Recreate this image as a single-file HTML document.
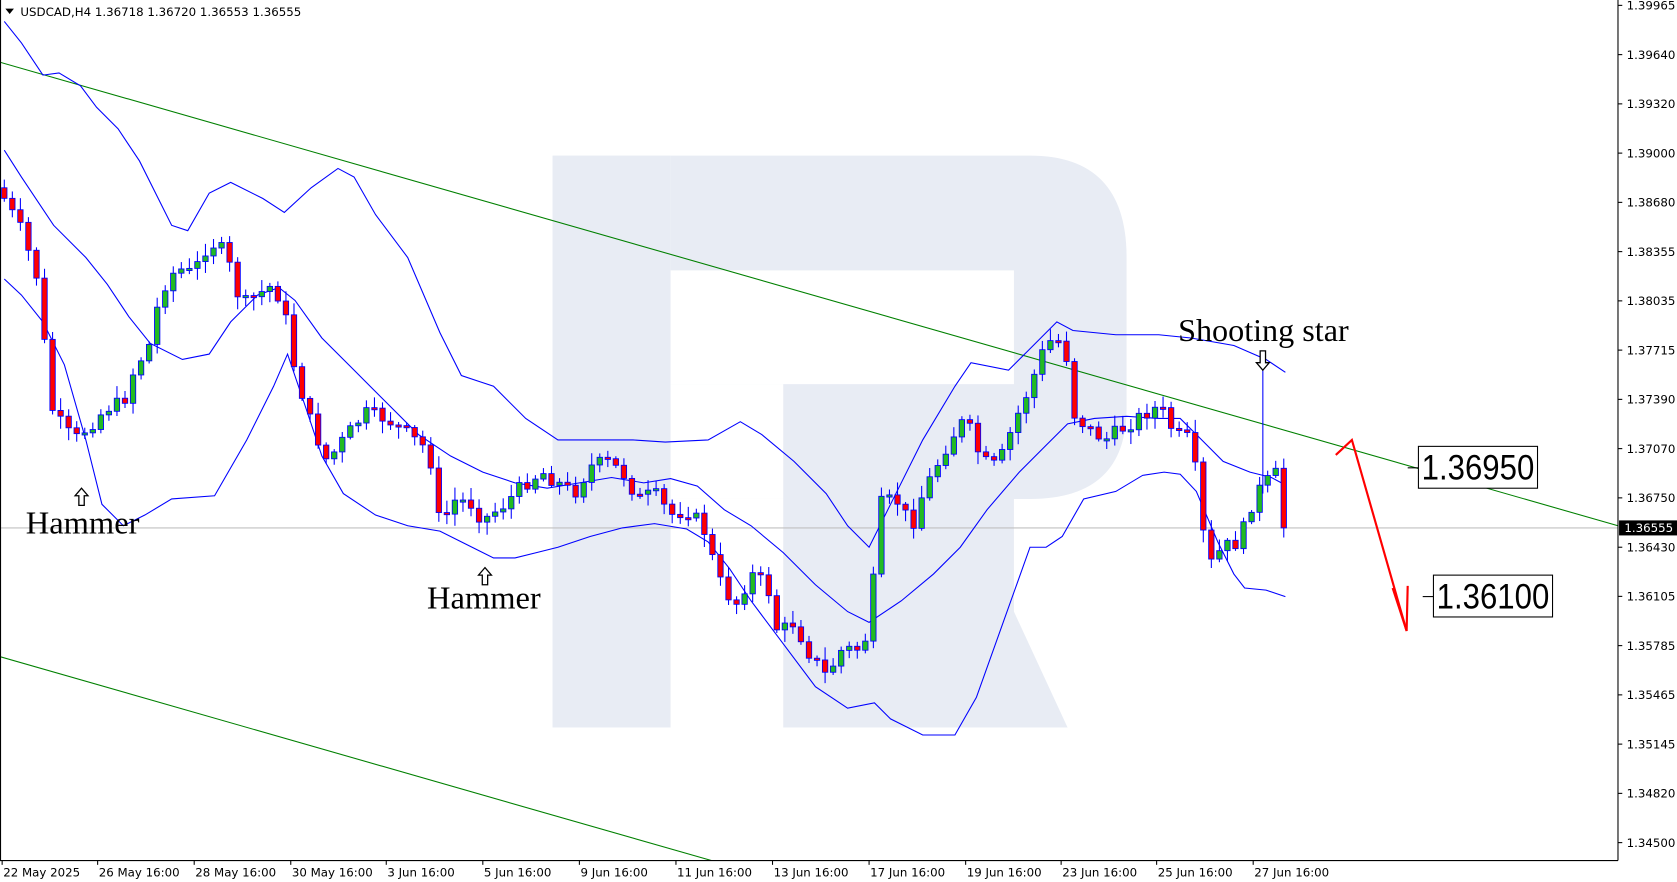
<!DOCTYPE html><html><head><meta charset="utf-8"><style>html,body{margin:0;padding:0;background:#fff;overflow:hidden}svg{display:block}text{font-family:"Liberation Sans",sans-serif}</style></head><body>
<svg id="s" width="1677" height="882" viewBox="0 0 1563 822" preserveAspectRatio="none" xmlns="http://www.w3.org/2000/svg">
<rect width="1563" height="822" fill="#fff"/>
<g fill="#e8ecf4">
<rect x="515" y="145" width="110" height="533"/>
<path d="M625 145 H960 Q1050 145 1050 240 V380 Q1050 465 960 465 H625 Z"/>
<path d="M730 358 H945 V570 L995 678 H730 Z"/>
</g>
<rect x="625" y="252" width="320" height="106" fill="#fff"/>
<rect x="625" y="358" width="105" height="107" fill="#fff"/>
<line x1="0" y1="492" x2="1508" y2="492" stroke="#c0c0c0" stroke-width="1"/>
<line x1="0" y1="58" x2="1508" y2="490" stroke="#008000" stroke-width="1"/>
<line x1="0" y1="612" x2="663" y2="802" stroke="#008000" stroke-width="1"/>
<g id="bands" fill="none" stroke="#0000ff" stroke-width="1"></g>
<g id="candles"></g>
<text x="24" y="497" font-size="30" textLength="106" lengthAdjust="spacingAndGlyphs" style="font-family:'Liberation Serif',serif">Hammer</text>
<text x="398" y="567" font-size="30" textLength="106" lengthAdjust="spacingAndGlyphs" style="font-family:'Liberation Serif',serif">Hammer</text>
<text x="1098" y="318" font-size="30" textLength="159" lengthAdjust="spacingAndGlyphs" style="font-family:'Liberation Serif',serif">Shooting star</text>
<g fill="#fff" stroke="#000" stroke-width="1.2">
<path d="M76 455 L70 462 H73.5 V471 H78.5 V462 H82 Z"/>
<path d="M452 529 L446 536 H449.5 V545 H454.5 V536 H458 Z"/>
<path d="M1177 345 L1171 338 H1174.5 V327 H1179.5 V338 H1183 Z"/>
</g>
<g stroke="#ff0000" stroke-width="2" fill="none">
<path d="M1245 424 L1260 410 L1311 588"/>
<path d="M1298 548 L1311 588 L1312 546"/>
</g>
<line x1="1312" y1="436" x2="1322" y2="436" stroke="#000"/>
<rect x="1322" y="416" width="111" height="39" fill="#fff" stroke="#000"/>
<text x="1325" y="447" font-size="33" textLength="105" lengthAdjust="spacingAndGlyphs">1.36950</text>
<line x1="1326" y1="556" x2="1336" y2="556" stroke="#000"/>
<rect x="1336" y="536" width="111" height="39" fill="#fff" stroke="#000"/>
<text x="1339" y="567" font-size="33" textLength="105" lengthAdjust="spacingAndGlyphs">1.36100</text>
<line x1="1508" y1="0" x2="1508" y2="802" stroke="#000"/>
<line x1="0" y1="802" x2="1508" y2="802" stroke="#000"/>
<line x1="0.5" y1="0" x2="0.5" y2="802" stroke="#000"/>
<g id="axis" font-size="11" fill="#000"></g>
<path d="M5 8 L13 8 L9 13 Z" fill="#000"/>
<text x="19" y="15" font-size="11" style="font-family:'DejaVu Sans',sans-serif">USDCAD,H4  1.36718 1.36720 1.36553 1.36555</text>
<rect x="1509" y="485" width="54" height="14" fill="#000"/>
<text x="1514" y="496" font-size="11" fill="#fff" style="font-family:'DejaVu Sans',sans-serif">1.36555</text>
</svg>
<script>
(function(){
var NS="http://www.w3.org/2000/svg";
function el(p,t,a,tx){var e=document.createElementNS(NS,t);for(var k in a)e.setAttribute(k,a[k]);if(tx)e.textContent=tx;document.getElementById(p).appendChild(e);return e;}
var prices=["1.39965","1.39640","1.39320","1.39000","1.38680","1.38355","1.38035","1.37715","1.37390","1.37070","1.36750","1.36430","1.36105","1.35785","1.35465","1.35145","1.34820","1.34500"];
prices.forEach(function(p,i){var y=5+i*45.9;if(p=="1.36430")y=510;el("axis","line",{x1:1508,y1:y,x2:1512,y2:y,stroke:"#000"});el("axis","text",{x:1516,y:y+4,style:"font-family:'DejaVu Sans',sans-serif"},p);});
var times=[[2,"22 May 2025"],[91,"26 May 16:00"],[181,"28 May 16:00"],[271,"30 May 16:00"],[360,"3 Jun 16:00"],[450,"5 Jun 16:00"],[540,"9 Jun 16:00"],[630,"11 Jun 16:00"],[720,"13 Jun 16:00"],[810,"17 Jun 16:00"],[900,"19 Jun 16:00"],[989,"23 Jun 16:00"],[1078,"25 Jun 16:00"],[1168,"27 Jun 16:00"]];
times.forEach(function(t){el("axis","line",{x1:t[0],y1:802,x2:t[0],y2:806,stroke:"#000"});el("axis","text",{x:t[0]+1,y:817,style:"font-family:'DejaVu Sans',sans-serif"},t[1]);});
function pl(a){return a.map(function(p){return p.join(",")}).join(" ");}
var up=[[4,20],[20,40],[40,70],[55,68],[75,80],[90,100],[110,120],[130,150],[160,210],[175,215],[195,180],[215,170],[245,185],[265,198],[290,175],[315,157],[330,165],[350,200],[380,240],[410,310],[430,350],[460,360],[490,390],[520,410],[560,410],[590,410],[620,412],[660,410],[690,393],[710,405],[740,430],[770,460],[790,490],[810,510],[830,470],[860,410],[890,360],[905,338],[940,345],[965,320],[985,300],[1000,308],[1040,312],[1080,312],[1110,315],[1150,322],[1180,335],[1198,347]];
var mid=[[4,140],[20,165],[50,210],[80,240],[100,265],[120,295],[140,320],[170,335],[195,330],[215,300],[240,275],[260,268],[275,280],[300,315],[330,345],[360,375],[390,405],[420,425],[450,440],[480,450],[510,455],[540,450],[570,445],[600,450],[625,446],[650,453],[675,475],[700,490],[730,515],[760,545],[790,570],[810,580],[840,560],[870,535],[895,510],[920,475],[950,440],[975,415],[995,395],[1020,390],[1050,388],[1080,390],[1100,390],[1120,410],[1140,430],[1165,440],[1185,445],[1198,452]];
var lo=[[4,260],[20,275],[40,300],[60,340],[80,410],[95,470],[115,490],[135,480],[160,465],[200,462],[230,410],[255,360],[268,330],[285,380],[300,425],[320,460],[350,480],[380,490],[410,495],[440,510],[460,520],[480,520],[500,515],[520,510],[550,500],[580,492],[610,488],[640,493],[660,505],[680,530],[700,560],[730,600],[760,640],[790,660],[815,655],[830,670],[860,685],[890,685],[910,650],[935,580],[960,510],[975,510],[990,500],[1010,465],[1040,458],[1065,443],[1085,440],[1100,442],[1115,458],[1135,505],[1150,535],[1160,548],[1180,550],[1198,556]];
[up,mid,lo].forEach(function(a){el("bands","polyline",{points:pl(a)});});
var kp=[[4,185],[20,215],[35,260],[48,380],[60,400],[70,410],[85,395],[100,380],[115,375],[125,345],[140,320],[150,270],[165,250],[180,255],[195,225],[210,235],[225,285],[240,275],[255,265],[265,290],[275,345],[290,395],[305,430],[320,410],[340,385],[360,390],[380,405],[400,420],[410,490],[425,465],[440,470],[450,485],[470,470],[490,450],[505,440],[520,450],[535,460],[550,435],[565,430],[580,440],[595,465],[610,460],[625,480],[640,475],[655,490],[670,540],[685,565],[700,535],[715,545],[725,590],[740,580],[755,610],[770,630],[785,605],[800,605],[810,590],[820,470],[835,465],[850,490],[860,460],[870,440],[885,410],[900,390],[915,430],[930,435],[945,395],[960,360],[975,320],[985,315],[995,335],[1000,385],[1015,400],[1030,410],[1045,400],[1060,390],[1075,380],[1085,385],[1095,405],[1110,410],[1118,465],[1125,530],[1140,510],[1155,505],[1170,460],[1185,445],[1192,440],[1198,490]];
function at(x){for(var i=1;i<kp.length;i++){if(x<=kp[i][0]){var a=kp[i-1],b=kp[i];return a[1]+(b[1]-a[1])*(x-a[0])/(b[0]-a[0]);}}return kp[kp.length-1][1];}
var seed=7;function rnd(){seed=(seed*9301+49297)%233280;return seed/233280;}
var prev=175;
for(var x=4;x<=1198;x+=7.5){var c=at(x)+(rnd()-0.5)*14;if(x>1195)c=492;var o=prev;var tp=Math.min(o,c),bt=Math.max(o,c);if(bt-tp<2){bt=tp+2;}
var hi=tp-2-rnd()*10,lw=bt+2+rnd()*10;
el("candles","line",{x1:x,y1:hi,x2:x,y2:lw,stroke:"#0000ff","stroke-width":1});
el("candles","rect",{x:x-2.5,y:tp,width:5,height:bt-tp,fill:c<o?"#22bb22":"#ff0000",stroke:"#0000ff","stroke-width":0.8});
prev=c;}
el("candles","line",{x1:1177,y1:345,x2:1177,y2:460,stroke:"#0000ff"});
})();
</script>
</body></html>
